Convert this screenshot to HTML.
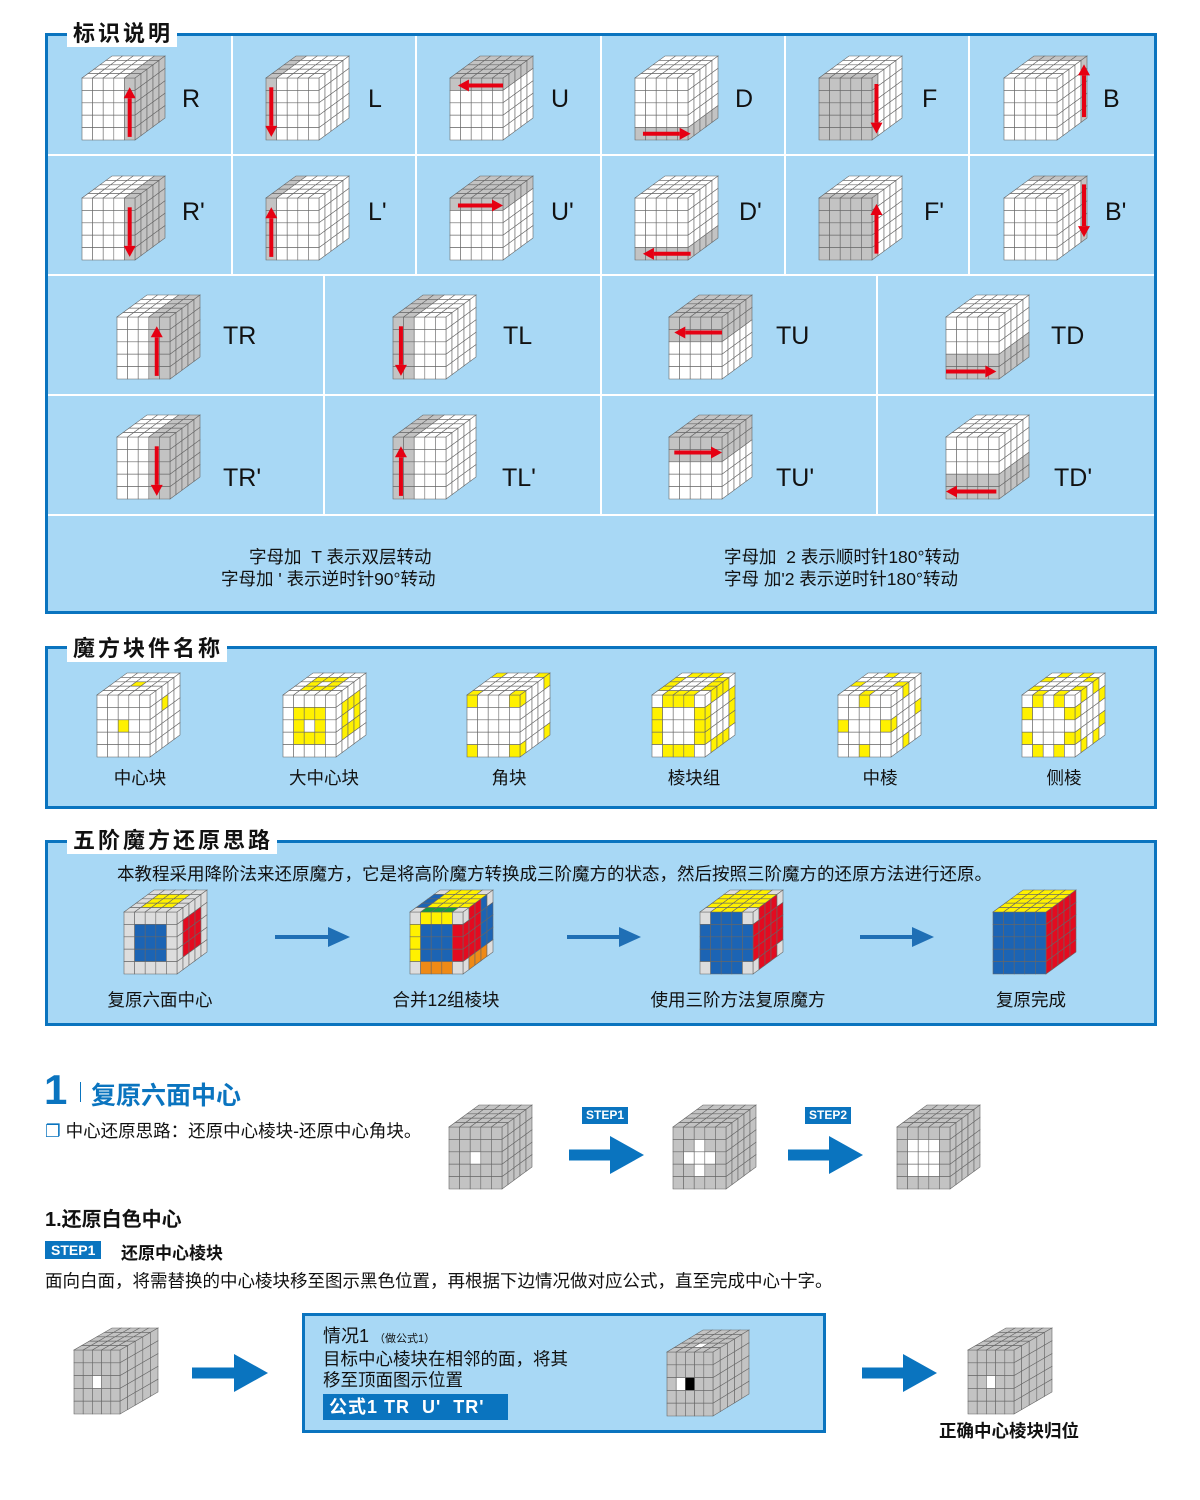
<!DOCTYPE html>
<html><head><meta charset="utf-8">
<style>
*{margin:0;padding:0;box-sizing:border-box}
body{width:1200px;height:1500px;background:#fff;position:relative;overflow:hidden;font-family:"Liberation Sans","Noto Sans CJK SC",sans-serif;color:#111}
.box{position:absolute;border:3px solid #0a74bf;background:#a8d8f5}
.ttl{position:absolute;background:#fff;font-weight:bold;font-size:22px;letter-spacing:3px;padding:0 4px 0 6px;line-height:26px;color:#111}
.t{position:absolute;white-space:nowrap}
.vl{position:absolute;background:#fff;width:2px}
.hl{position:absolute;background:#fff;height:2px}
.lt{position:absolute;font-size:25px;color:#111}
.lb{position:absolute;font-size:17.5px;transform:translateX(-50%);white-space:nowrap}
#ov{position:absolute;left:0;top:0}
</style></head><body>

<div class="box" style="left:45px;top:33px;width:1112px;height:581px"></div>
<div class="hl" style="left:48px;top:154px;width:1106px"></div>
<div class="hl" style="left:48px;top:274px;width:1106px"></div>
<div class="hl" style="left:48px;top:394px;width:1106px"></div>
<div class="hl" style="left:48px;top:514px;width:1106px"></div>
<div class="vl" style="left:231px;top:36px;height:239px"></div>
<div class="vl" style="left:415px;top:36px;height:239px"></div>
<div class="vl" style="left:600px;top:36px;height:479px"></div>
<div class="vl" style="left:784px;top:36px;height:239px"></div>
<div class="vl" style="left:968px;top:36px;height:239px"></div>
<div class="vl" style="left:323px;top:275px;height:240px"></div>
<div class="vl" style="left:876px;top:275px;height:240px"></div>
<div class="ttl" style="left:67px;top:21px">标识说明</div>

<div class="lt" style="left:182px;top:85px">R</div>
<div class="lt" style="left:368px;top:85px">L</div>
<div class="lt" style="left:551px;top:85px">U</div>
<div class="lt" style="left:735px;top:85px">D</div>
<div class="lt" style="left:922px;top:85px">F</div>
<div class="lt" style="left:1103px;top:85px">B</div>
<div class="lt" style="left:182px;top:198px">R'</div>
<div class="lt" style="left:368px;top:198px">L'</div>
<div class="lt" style="left:551px;top:198px">U'</div>
<div class="lt" style="left:739px;top:198px">D'</div>
<div class="lt" style="left:924px;top:198px">F'</div>
<div class="lt" style="left:1105px;top:198px">B'</div>
<div class="lt" style="left:223px;top:322px">TR</div>
<div class="lt" style="left:503px;top:322px">TL</div>
<div class="lt" style="left:776px;top:322px">TU</div>
<div class="lt" style="left:1051px;top:322px">TD</div>
<div class="lt" style="left:223px;top:464px">TR'</div>
<div class="lt" style="left:502px;top:464px">TL'</div>
<div class="lt" style="left:776px;top:464px">TU'</div>
<div class="lt" style="left:1054px;top:464px">TD'</div>

<div class="t" style="left:249px;top:544px;font-size:17.5px">字母加&nbsp; T 表示双层转动</div>
<div class="t" style="left:221px;top:566px;font-size:17.5px">字母加 ' 表示逆时针90°转动</div>
<div class="t" style="left:724px;top:544px;font-size:17.5px">字母加&nbsp; 2 表示顺时针180°转动</div>
<div class="t" style="left:724px;top:566px;font-size:17.5px">字母 加'2 表示逆时针180°转动</div>

<div class="box" style="left:45px;top:646px;width:1112px;height:163px"></div>
<div class="ttl" style="left:67px;top:636px">魔方块件名称</div>
<div class="lb" style="left:140px;top:765px">中心块</div>
<div class="lb" style="left:324px;top:765px">大中心块</div>
<div class="lb" style="left:509px;top:765px">角块</div>
<div class="lb" style="left:694px;top:765px">棱块组</div>
<div class="lb" style="left:880px;top:765px">中棱</div>
<div class="lb" style="left:1064px;top:765px">侧棱</div>

<div class="box" style="left:45px;top:840px;width:1112px;height:186px"></div>
<div class="ttl" style="left:67px;top:828px">五阶魔方还原思路</div>
<div class="t" style="left:117px;top:861px;font-size:17.5px">本教程采用降阶法来还原魔方，它是将高阶魔方转换成三阶魔方的状态，然后按照三阶魔方的还原方法进行还原。</div>
<div class="lb" style="left:160px;top:987px">复原六面中心</div>
<div class="lb" style="left:446px;top:987px">合并12组棱块</div>
<div class="lb" style="left:738px;top:987px">使用三阶方法复原魔方</div>
<div class="lb" style="left:1031px;top:987px">复原完成</div>

<div class="t" style="left:44px;top:1066px;font-size:42px;color:#0a74bf;font-weight:bold;line-height:48px">1</div>
<div style="position:absolute;left:80px;top:1082px;width:1px;height:20px;background:#0a74bf"></div>
<div class="t" style="left:91px;top:1076px;font-size:25px;color:#0a74bf;font-weight:bold">复原六面中心</div>
<div class="t" style="left:45px;top:1118px;font-size:17.5px"><span style="color:#0a74bf">❐</span> 中心还原思路：还原中心棱块-还原中心角块。</div>
<div class="t" style="left:582px;top:1107px;font-size:12px;color:#fff;background:#0a74bf;font-weight:bold;padding:0 4px;line-height:17px">STEP1</div>
<div class="t" style="left:805px;top:1107px;font-size:12px;color:#fff;background:#0a74bf;font-weight:bold;padding:0 4px;line-height:17px">STEP2</div>
<div class="t" style="left:45px;top:1203px;font-size:20px;font-weight:bold">1.还原白色中心</div>
<div class="t" style="left:45px;top:1241px;font-size:14px;color:#fff;background:#0a74bf;font-weight:bold;padding:0 6px;line-height:18px">STEP1</div>
<div class="t" style="left:121px;top:1239px;font-size:17px;font-weight:bold">还原中心棱块</div>
<div class="t" style="left:45px;top:1268px;font-size:17.5px">面向白面，将需替换的中心棱块移至图示黑色位置，再根据下边情况做对应公式，直至完成中心十字。</div>

<div class="box" style="left:302px;top:1313px;width:524px;height:120px"></div>
<div class="t" style="left:323px;top:1322px;font-size:18px">情况1 <span style="font-size:11px">（做公式1）</span></div>
<div class="t" style="left:323px;top:1346px;font-size:17.5px">目标中心棱块在相邻的面，将其</div>
<div class="t" style="left:323px;top:1367px;font-size:17.5px">移至顶面图示位置</div>
<div class="t" style="left:323px;top:1394px;font-size:18px;color:#fff;background:#0a74bf;font-weight:bold;padding:0 6px;line-height:26px;width:185px;letter-spacing:1px">公式1 TR&nbsp; U'&nbsp; TR'</div>
<div class="t" style="left:939px;top:1418px;font-size:17.5px;font-weight:bold">正确中心棱块归位</div>

<svg id="ov" width="1200" height="1500" xmlns="http://www.w3.org/2000/svg"></svg>

<script>
var S=document.getElementById('ov'),out='';
function poly(p,fill,st,sw){out+='<polygon points="'+p.map(function(a){return a[0].toFixed(1)+','+a[1].toFixed(1)}).join(' ')+'" fill="'+fill+'" stroke="'+(st||'#666')+'" stroke-width="'+(sw||0.6)+'"/>';}
function cube(x,y,o){
 o=o||{};var W=o.W||53,H=o.H||62,dx=o.dx||30,dy=o.dy||-22,base=o.base||'#fff',f=o.f||function(){return null};
 function tp(u,v){return [x+u*W+v*dx,y+v*dy];}
 function sp(v,h){return [x+W+v*dx,y+h*H+v*dy];}
 for(var r=0;r<5;r++)for(var c=0;c<5;c++){
  var col=f('F',r,c)||base;
  poly([[x+c*W/5,y+r*H/5],[x+(c+1)*W/5,y+r*H/5],[x+(c+1)*W/5,y+(r+1)*H/5],[x+c*W/5,y+(r+1)*H/5]],col);
  col=f('T',r,c)||base;var v0=(4-r)/5,v1=(5-r)/5;
  poly([tp(c/5,v0),tp((c+1)/5,v0),tp((c+1)/5,v1),tp(c/5,v1)],col);
  col=f('S',r,c)||base;
  poly([sp(c/5,r/5),sp((c+1)/5,r/5),sp((c+1)/5,(r+1)/5),sp(c/5,(r+1)/5)],col);
 }
 return {fp:function(u,h){return [x+u*W,y+h*H]},sp:sp};
}
function arrow(a,b,col,w,hw,hl){
 var dx=b[0]-a[0],dy=b[1]-a[1],L=Math.sqrt(dx*dx+dy*dy),ux=dx/L,uy=dy/L,px=-uy,py=ux;
 var bx=b[0]-ux*hl,by=b[1]-uy*hl;
 out+='<line x1="'+a[0]+'" y1="'+a[1]+'" x2="'+bx+'" y2="'+by+'" stroke="'+col+'" stroke-width="'+w+'"/>';
 out+='<polygon points="'+b[0]+','+b[1]+' '+(bx+px*hw)+','+(by+py*hw)+' '+(bx-px*hw)+','+(by-py*hw)+'" fill="'+col+'"/>';
}
var G='#c3c3c3',RED='#e60012',Y='#fff100',BL='#1c64b4',RR='#e30b20',GR='#ddd';
function gf(fn){return function(fc,r,c){return fn(fc,r,c)?G:null}}
function mv(x,y,fn,arr){var k=cube(x,y,{f:gf(fn)});var a=arr(k);arrow(a[0],a[1],RED,4,6,11);}
var y1=78,y2=198;
mv(82,y1,function(f,r,c){return (f!='S'&&c==4)||f=='S'},function(k){return [k.fp(.9,.95),k.fp(.9,.15)]});
mv(266,y1,function(f,r,c){return f!='S'&&c==0},function(k){return [k.fp(.1,.15),k.fp(.1,.95)]});
mv(450,y1,function(f,r,c){return f=='T'||r==0},function(k){return [k.fp(1,.12),k.fp(.15,.12)]});
mv(635,y1,function(f,r,c){return f!='T'&&r==4},function(k){return [k.fp(.15,.9),k.fp(1.05,.9)]});
mv(819,y1,function(f,r,c){return f=='F'||(f=='T'&&r==4)||(f=='S'&&c==0)},function(k){return [k.sp(.15,.15),k.sp(.15,.95)]});
mv(1004,y1,function(f,r,c){return (f=='T'&&r==0)||(f=='S'&&c==4)},function(k){return [k.sp(.9,.95),k.sp(.9,.1)]});
mv(82,y2,function(f,r,c){return (f!='S'&&c==4)||f=='S'},function(k){return [k.fp(.9,.15),k.fp(.9,.95)]});
mv(266,y2,function(f,r,c){return f!='S'&&c==0},function(k){return [k.fp(.1,.95),k.fp(.1,.15)]});
mv(450,y2,function(f,r,c){return f=='T'||r==0},function(k){return [k.fp(.15,.12),k.fp(1,.12)]});
mv(635,y2,function(f,r,c){return f!='T'&&r==4},function(k){return [k.fp(1.05,.9),k.fp(.15,.9)]});
mv(819,y2,function(f,r,c){return f=='F'||(f=='T'&&r==4)||(f=='S'&&c==0)},function(k){return [k.sp(.15,.95),k.sp(.15,.15)]});
mv(1004,y2,function(f,r,c){return (f=='T'&&r==0)||(f=='S'&&c==4)},function(k){return [k.sp(.9,.1),k.sp(.9,.95)]});
var y3=317,y4=437;
mv(117,y3,function(f,r,c){return f=='S'||c>=3},function(k){return [k.fp(.75,.95),k.fp(.75,.15)]});
mv(393,y3,function(f,r,c){return f!='S'&&c<=1},function(k){return [k.fp(.15,.15),k.fp(.15,.95)]});
mv(669,y3,function(f,r,c){return f=='T'||r<=1},function(k){return [k.fp(1,.25),k.fp(.1,.25)]});
mv(946,y3,function(f,r,c){return f!='T'&&r>=3},function(k){return [k.fp(0,.88),k.fp(.95,.88)]});
mv(117,y4,function(f,r,c){return f=='S'||c>=3},function(k){return [k.fp(.75,.15),k.fp(.75,.95)]});
mv(393,y4,function(f,r,c){return f!='S'&&c<=1},function(k){return [k.fp(.15,.95),k.fp(.15,.15)]});
mv(669,y4,function(f,r,c){return f=='T'||r<=1},function(k){return [k.fp(.1,.25),k.fp(1,.25)]});
mv(946,y4,function(f,r,c){return f!='T'&&r>=3},function(k){return [k.fp(.95,.88),k.fp(0,.88)]});
var ys=695;
function yl(fn){return function(f,r,c){return fn(f,r,c)?Y:null}}
cube(97,ys,{f:yl(function(f,r,c){return (f=='F'&&r==2&&c==2)||(f=='T'&&r==2&&c==2)||(f=='S'&&r==1&&c==2)})});
cube(283,ys,{f:yl(function(f,r,c){return r>=1&&r<=3&&c>=1&&c<=3&&!(r==2&&c==2)})});
cube(467,ys,{f:yl(function(f,r,c){return (r==0||r==4)&&(c==0||c==4)})});
cube(652,ys,{f:yl(function(f,r,c){return ((r==0||r==4)&&c>0&&c<4)||((c==0||c==4)&&r>0&&r<4)})});
cube(838,ys,{f:yl(function(f,r,c){return ((r==0||r==4)&&c==2)||((c==0||c==4)&&r==2)})});
cube(1022,ys,{f:yl(function(f,r,c){return ((r==0||r==4)&&(c==1||c==3))||((c==0||c==4)&&(r==1||r==3))})});
var y5=912;
function ctr(r,c){return r>=1&&r<=3&&c>=1&&c<=3}
cube(124,y5,{base:GR,f:function(f,r,c){if(!ctr(r,c))return null;return f=='F'?BL:f=='T'?Y:RR}});
cube(410,y5,{base:GR,f:function(f,r,c){
 var corner=(r==0||r==4)&&(c==0||c==4);if(corner)return null;
 if(f=='F'){if(ctr(r,c))return BL;if(r==0)return Y;if(c==0)return Y;if(r==4)return '#ef8a16';return RR;}
 if(f=='T'){if(r==4)return '#169a3c';if(c==0)return BL;return Y;}
 if(f=='S'){if(r==4)return '#ef8a16';if(c>=3)return BL;return RR;}
}});
cube(700,y5,{base:GR,f:function(f,r,c){var corner=(r==0||r==4)&&(c==0||c==4);if(corner)return null;return f=='F'?BL:f=='T'?Y:RR}});
cube(993,y5,{f:function(f){return f=='F'?BL:f=='T'?Y:RR}});
arrow([275,937],[350,937],'#1f6fb5',4,10,22);
arrow([567,937],[641,937],'#1f6fb5',4,10,22);
arrow([860,937],[934,937],'#1f6fb5',4,10,22);
var gb='#c3c3c3';
function wh(fn){return function(f,r,c){return (f=='F'&&fn(r,c))?'#fff':null}}
cube(449,1127,{base:gb,f:wh(function(r,c){return r==2&&c==2})});
cube(673,1127,{base:gb,f:wh(function(r,c){return (r==2&&c>=1&&c<=3)||(c==2&&r>=1&&r<=3)})});
cube(897,1127,{base:gb,f:wh(function(r,c){return ctr(r,c)})});
arrow([569,1155],[644,1155],'#0a74bf',11,19,34);
arrow([788,1155],[863,1155],'#0a74bf',11,19,34);
cube(74,1350,{W:46,H:64,dx:38,dy:-22,base:gb,f:wh(function(r,c){return r==2&&c==2})});
cube(667,1352,{W:46,H:64,dx:36,dy:-22,base:gb,f:function(f,r,c){if(f=='T'&&r==3&&c==2)return '#fff';if(f=='F'&&r==2&&c==1)return '#fff';if(f=='F'&&r==2&&c==2)return '#000';return null}});
cube(968,1350,{W:46,H:64,dx:38,dy:-22,base:gb,f:wh(function(r,c){return r==2&&c==2})});
arrow([192,1373],[268,1373],'#0a74bf',11,19,34);
arrow([862,1373],[937,1373],'#0a74bf',11,19,34);
S.innerHTML=out;
</script>
</body></html>
